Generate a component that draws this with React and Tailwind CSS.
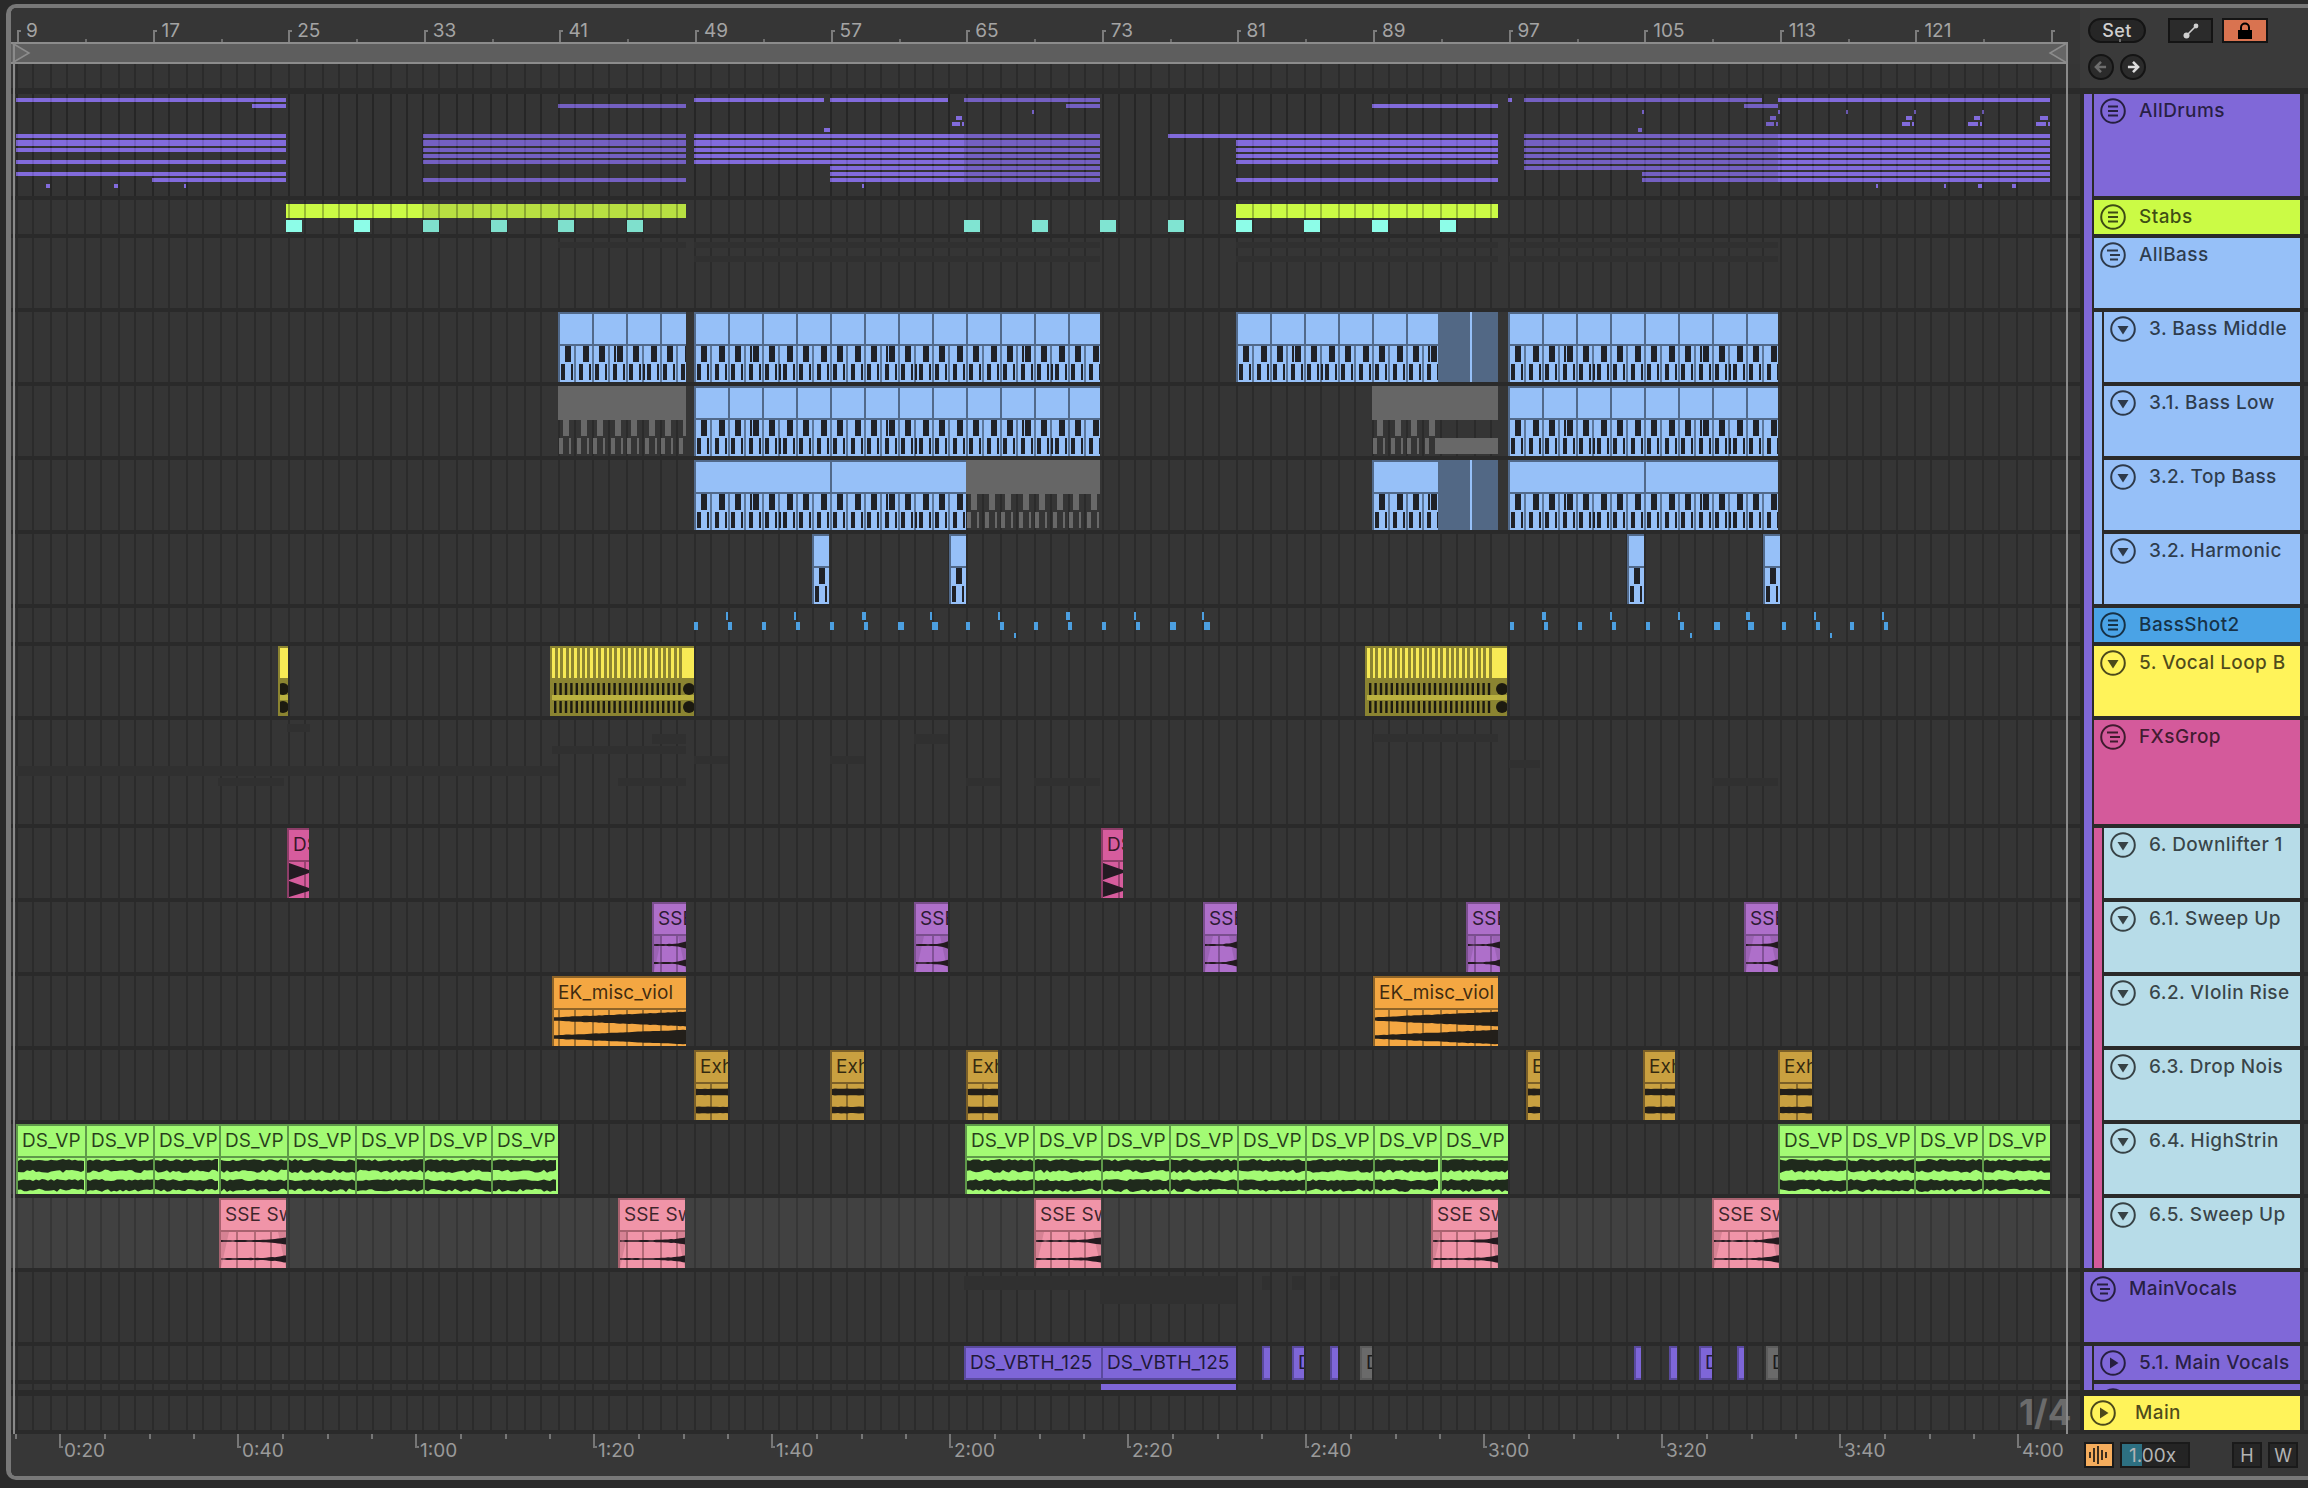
const GRID = Array.from({ length: 123 }, (_, i) => {
  const k = Math.floor(i / 2);
  const even = Math.round((16.2 + 33.9 * k) / 2) * 2;
  return i % 2 === 0 ? even : even + 16;
});

const seeded = (s) => {
  let v = s * 9301 + 49297;
  return () => {
    v = (v * 9301 + 49297) % 233280;
    return v / 233280;
  };
};

// clip palettes
const BLUE = { bg: "#96c0f8", edge: "#51698a" };
const GREEN = { bg: "#a3fb74", edge: "#5f9a4a" };
const YELLOW = { bg: "#f7ea55", edge: "#8b8431" };
const SALMON = { bg: "#f094a8", edge: "#a8626f" };
const VIOLET = { bg: "#ae6fca", edge: "#7a4e8e" };
const ORANGE = { bg: "#f4a742", edge: "#8e6428" };
const GOLD = { bg: "#c9a040", edge: "#7a5f28" };
const PINK = { bg: "#d65c9d", edge: "#8d3d68" };
const PURPLE = { bg: "#7e66d8", edge: "#5a4a9e" };

function Bands({ w, dark, seed }) {
  // two dark channels with a rough edge, the clip colour shows in the gaps
  const r = seeded(seed);
  const band = (y0, y1) => {
    const top = [];
    const bot = [];
    for (let x = 0; x <= w; x += 3) {
      top.push(`${x},${y0 + r() * 2.2}`);
      bot.unshift(`${x},${y1 - r() * 3.4}`);
    }
    return top.concat(bot).join(" ");
  };
  return (
    <>
      <polygon points={band(1, 15)} fill={dark} />
      <polygon points={band(21, 34)} fill={dark} />
    </>
  );
}

function Taper({ w, from, to, ys, seed, pow = 1, dark = "#231f1a" }) {
  const r = seeded(seed);
  return ys.map((y) => {
    const top = [];
    const bot = [];
    for (let x = 0; x <= w + 2; x += 3) {
      const t = Math.min(1, x / w);
      const a = (from + (to - from) * Math.pow(t, pow)) / 2 + r() * 0.5;
      top.push(`${x},${y - a}`);
      bot.unshift(`${x},${y + a}`);
    }
    return <polygon key={y} points={top.concat(bot).join(" ")} fill={dark} />;
  });
}

function Midi({ w, note, grey }) {
  const rects = [];
  for (let k = 0; k * 34 < w; k++) {
    const o = k * 34;
    [
      [5, 0, 6, 16],
      [23, 0, 6, 16],
      [1, 18, 4, 16],
      [11, 18, 2, 16],
      [19, 18, 4, 16],
      [29, 18, 2, 16],
    ].forEach(([x, y, rw, rh], i) => {
      rects.push(<rect key={`${k}-${i}`} x={o + x} y={y} width={rw} height={rh} fill={note} />);
    });
    if (k % 4 === 1 && !grey) rects.push(<rect key={`${k}x`} x={o + 20} y={0} width={2} height={16} fill={note} />);
    if (k % 4 === 2 && !grey) rects.push(<rect key={`${k}y`} x={o + 15} y={18} width={2} height={16} fill={note} />);
  }
  return rects;
}

function ClipBody({ kind, w, x0, edge, seed }) {
  const lines = GRID.filter((g) => g > x0 + 2 && g < x0 + w).map((g) => g - x0);
  return (
    <svg width={w} height={36} className="block">
      {kind !== "stripe" &&
        lines.map((x) => <rect key={x} x={x} y={0} width={2} height={36} fill={edge} opacity={kind === "green" ? 0 : 0.85} />)}
      {kind === "midi" && <Midi w={w} note="#202228" />}
      {kind === "green" && <Bands w={w} dark="#1f2a1c" seed={seed} />}
      {kind === "thin" && (
        <>
          <polygon points={`0,0 8,0 0,36`} fill={edge} opacity="0.35" />
          <polygon points={`${w},0 ${w - 8},0 ${w},36`} fill={edge} opacity="0.35" />
          <Taper w={w} from={1.2} to={7} pow={5} ys={[9, 27]} seed={seed} dark="#231a1f" />
        </>
      )}
      {kind === "wedge" && <Taper w={w} from={3} to={14} ys={[9, 27]} seed={seed} />}
      {kind === "thick" && <Taper w={w} from={6} to={6} ys={[8, 26]} seed={seed} />}
      {kind === "tri" && (
        <>
          <polygon points={`0,1 ${w},8 ${w},11 0,18`} fill="#231a22" />
          <polygon points={`0,19 ${w},26 ${w},29 0,35`} fill="#231a22" />
        </>
      )}
      {kind === "stripe" && (
        <>
          <rect width={w} height={36} fill={edge} />
          <rect y={15} width={w} height={5} fill="#f7ea55" opacity="0.45" />
          {Array.from({ length: Math.max(0, Math.floor((w - 12) / 5.4)) }, (_, i) => (
            <g key={i} fill="#1c1a10">
              <rect x={2 + i * 5.4} y={3} width={2.4} height={12} />
              <rect x={2 + i * 5.4} y={21} width={2.4} height={12} />
            </g>
          ))}
          <circle cx={w - 5} cy={9} r={6} fill="#1c1a10" />
          <circle cx={w - 5} cy={27} r={6} fill="#1c1a10" />
        </>
      )}
    </svg>
  );
}

function Clip({ x0, x1, pal, label, kind, div, seed = 1 }) {
  const w = x1 - x0;
  const marks = [];
  if (div) for (let x = div; x < w - 4; x += div) marks.push(x);
  return (
    <div
      className="absolute top-0 h-full overflow-hidden"
      style={{ left: x0 - 11, width: w, background: pal.edge }}
    >
      <div
        className="relative ml-[2px] mt-[2px] h-[30px] overflow-hidden whitespace-nowrap pl-[4px] text-[19px] leading-[30px] tracking-[0.1px] text-black/75"
        style={{ background: pal.bg }}
      >
        {label}
        {marks.map((x) => (
          <div key={x} className="absolute top-0 h-full w-[2px]" style={{ left: x - 2, background: pal.edge }} />
        ))}
        {kind === "stripe" &&
          Array.from({ length: Math.max(0, Math.floor((w - 14) / 5.4)) }, (_, i) => (
            <div key={i} className="absolute top-0 h-full w-[3px] bg-[#8b8431]" style={{ left: 3 + i * 5.4 }} />
          ))}
      </div>
      {kind && (
        <div className="mt-[2px] ml-[2px]" style={{ background: pal.bg }}>
          <ClipBody kind={kind} w={w - 2} x0={x0 + 2} edge={pal.edge} seed={seed} />
        </div>
      )}
    </div>
  );
}

// muted clip: header block with grey notes and no clip colour behind them
function GreyClip({ x0, x1, band }) {
  const w = x1 - x0;
  return (
    <div className="absolute top-0 h-full" style={{ left: x0 - 11, width: w }}>
      <div className="h-[34px] bg-[#666666]" />
      <svg width={w} height={36} className="block">
        <Midi w={band ? band - x0 : w} note="#686868" grey />
        {band && <rect x={band - x0 - 2} y={18} width={x1 - band + 2} height={16} fill="#686868" />}
      </svg>
    </div>
  );
}

function Box({ x0, x1, y = 0, h, color }) {
  return <div className="absolute" style={{ left: x0 - 11, width: x1 - x0, top: y, height: h ?? "100%", background: color }} />;
}

function Grid({ line = "#2b2b2b", opacity = 1 }) {
  return (
    <svg className="pointer-events-none absolute inset-0 h-full w-full" style={{ opacity }}>
      {GRID.map((g) => (
        <rect key={g} x={g - 11} y={0} width={2} height="100%" fill={line} />
      ))}
    </svg>
  );
}

const B = "#836bdc";
const D = "#7460c2";
const DRUMS = [
  [98, 16, 286, B], [104, 252, 286, B], [134, 16, 286, B], [140, 16, 286, B], [148, 16, 286, B],
  [160, 16, 286, B], [172, 16, 286, B], [178, 152, 286, B], [184, 46, 50, B], [184, 114, 118, B], [184, 184, 186, B],
  [104, 558, 686, D], [134, 423, 686, D], [140, 423, 686, D], [148, 423, 686, D], [154, 423, 686, D], [160, 423, 686, D], [178, 423, 686, D],
  [98, 694, 824, B], [98, 830, 948, B], [98, 964, 1100, D], [104, 1066, 1100, D], [110, 1032, 1034, D], [116, 956, 962, B],
  [122, 952, 960, B], [122, 962, 964, B], [128, 824, 830, B], [184, 862, 864, B],
  [134, 694, 964, B], [140, 694, 964, B], [148, 694, 964, B], [154, 694, 964, B], [160, 694, 964, B],
  [166, 830, 964, B], [172, 830, 964, B], [178, 830, 964, B],
  [134, 964, 1100, D], [140, 964, 1100, D], [148, 964, 1100, D], [154, 964, 1100, D], [160, 964, 1100, D],
  [166, 964, 1100, D], [172, 964, 1100, D], [178, 964, 1100, D],
  [104, 1372, 1498, B], [134, 1168, 1498, B], [140, 1236, 1498, B], [148, 1236, 1498, B], [154, 1236, 1498, B], [160, 1236, 1498, B], [178, 1236, 1498, B],
  [98, 1508, 1512, B], [98, 1524, 1762, D], [98, 1778, 2050, B], [104, 1744, 1778, D],
  [110, 1642, 1644, D], [110, 1778, 1780, D], [110, 1846, 1848, D], [110, 1914, 1916, D], [110, 1982, 1984, D],
  [116, 1770, 1776, D], [116, 1906, 1912, B], [116, 1974, 1980, B], [116, 2040, 2048, B],
  [122, 1766, 1774, D], [122, 1776, 1778, D], [122, 1902, 1910, B], [122, 1912, 1914, B], [122, 1968, 1978, B], [122, 1980, 1982, B], [122, 2036, 2046, B], [122, 2048, 2050, B],
  [128, 1638, 1642, D], [184, 1876, 1878, B], [184, 1944, 1946, B], [184, 1978, 1982, B], [184, 2012, 2016, B],
  ...[134, 140, 148, 154, 160, 166].flatMap((y) => [[y, 1524, 1778, D], [y, 1778, 2050, B]]),
  ...[172, 178].flatMap((y) => [[y, 1642, 1778, D], [y, 1778, 2050, B]]),
];

function DrumNotes() {
  return (
    <>
      <svg className="absolute inset-0 h-full w-full">
        {DRUMS.map(([y, a, b, c], i) => (
          <rect key={i} x={a - 11} y={y - 94} width={b - a} height={y === 140 ? 6 : 4} fill={c} />
        ))}
      </svg>
      <Grid line="#000000" opacity={0.1} />
    </>
  );
}

function StabClips() {
  const cyan = [
    [286, "#8dfde8"], [354, "#8dfde8"], [423, "#7fe0cd"], [491, "#7fe0cd"], [558, "#7fe0cd"], [627, "#7fe0cd"],
    [964, "#80e4d2"], [1032, "#80e4d2"], [1100, "#80e4d2"], [1168, "#80e4d2"],
    [1236, "#8dfde8"], [1304, "#8dfde8"], [1372, "#8dfde8"], [1440, "#8dfde8"],
  ];
  return (
    <>
      <Box x0={286} x1={423} y={4} h={14} color="#cbfb45" />
      <Box x0={423} x1={686} y={4} h={14} color="#b8e042" />
      <Box x0={1236} x1={1498} y={4} h={14} color="#cbfb45" />
      {cyan.map(([x, c]) => (
        <Box key={x} x0={x} x1={x + 16} y={20} h={12} color={c} />
      ))}
      <svg className="absolute inset-0 h-[18px] w-full">
        {GRID.filter((g) => (g > 286 && g < 686) || (g > 1236 && g < 1498)).map((g) => (
          <rect key={g} x={g - 11} y={4} width={2} height={14} fill="#000000" opacity="0.25" />
        ))}
      </svg>
    </>
  );
}

function ShotNotes() {
  const xs = [];
  for (let x = 694; x < 1207; x += 34) xs.push(x);
  for (let x = 1510; x < 1885; x += 34) xs.push(x);
  return (
    <svg className="absolute inset-0 h-full w-full">
      {xs.map((x, i) => (
        <g key={x} fill="#4c9fe0">
          <rect x={x - 11} y={14} width={i % 8 > 5 ? 6 : 4} height={8} />
          {i % 2 === 1 && <rect x={x - 13} y={4} width={i % 6 === 5 ? 4 : 2} height={8} />}
        </g>
      ))}
      {[1014, 1690, 1830].map((x) => (
        <rect key={x} x={x - 11} y={25} width={2} height={5} fill="#4c9fe0" />
      ))}
    </svg>
  );
}

const faint = "#303030";

const LANES = {
  drums: <DrumNotes />,
  stabs: <StabClips />,
  allbass: (
    <>
      <Box x0={558} x1={686} y={4} h={6} color={faint} />
      {[[694, 1100], [1236, 1498], [1509, 1778]].map(([a, b]) => (
        <div key={a}>
          <Box x0={a} x1={b} y={4} h={6} color={faint} />
          <Box x0={a} x1={b} y={18} h={6} color={faint} />
        </div>
      ))}
    </>
  ),
  middle: (
    <>
      <Clip x0={558} x1={686} pal={BLUE} kind="midi" div={34} />
      <Clip x0={694} x1={1100} pal={BLUE} kind="midi" div={34} />
      <Clip x0={1236} x1={1470} pal={BLUE} kind="midi" div={34} />
      <Box x0={1438} x1={1470} color="#526885" />
      <Box x0={1470} x1={1472} color="#96c0f8" />
      <Box x0={1472} x1={1498} color="#526885" />
      <Clip x0={1508} x1={1778} pal={BLUE} kind="midi" div={34} />
    </>
  ),
  low: (
    <>
      <GreyClip x0={558} x1={686} />
      <Clip x0={694} x1={1100} pal={BLUE} kind="midi" div={34} />
      <GreyClip x0={1372} x1={1498} band={1438} />
      <Clip x0={1508} x1={1778} pal={BLUE} kind="midi" div={34} />
    </>
  ),
  top: (
    <>
      <Clip x0={694} x1={966} pal={BLUE} kind="midi" div={136} />
      <GreyClip x0={966} x1={1100} />
      <Clip x0={1372} x1={1470} pal={BLUE} kind="midi" />
      <Box x0={1438} x1={1470} color="#526885" />
      <Box x0={1470} x1={1472} color="#96c0f8" />
      <Box x0={1472} x1={1498} color="#526885" />
      <Clip x0={1508} x1={1778} pal={BLUE} kind="midi" div={136} />
    </>
  ),
  harmonic: [812, 949, 1627, 1763].map((x) => <Clip key={x} x0={x} x1={x + 17} pal={BLUE} kind="midi" />),
  shot: <ShotNotes />,
  vocal: (
    <>
      <Clip x0={278} x1={288} pal={YELLOW} kind="stripe" />
      <Clip x0={550} x1={694} pal={YELLOW} kind="stripe" />
      <Clip x0={1365} x1={1507} pal={YELLOW} kind="stripe" />
    </>
  ),
  fx: (
    <>
      {[
        [287, 310, 4, 8], [652, 686, 14, 10], [552, 686, 26, 8], [694, 728, 36, 8], [830, 864, 36, 8], [914, 948, 14, 10],
        [618, 686, 58, 8], [15, 558, 46, 10], [218, 284, 58, 8], [966, 1000, 58, 8], [1034, 1100, 58, 8],
        [1509, 1540, 40, 8], [1712, 1778, 58, 8], [1373, 1498, 14, 8],
      ].map(([a, b, y, h]) => (
        <Box key={`${a}-${y}`} x0={a} x1={b} y={y} h={h} color={faint} />
      ))}
    </>
  ),
  down: [287, 1101].map((x) => <Clip key={x} x0={x} x1={x + 22} pal={PINK} kind="tri" label="DS" />),
  sweep: [652, 914, 1203, 1466, 1744].map((x, i) => (
    <Clip key={x} x0={x} x1={x + 34} pal={VIOLET} kind="thin" label="SSE" seed={i + 3} />
  )),
  violin: (
    <>
      <Clip x0={552} x1={686} pal={ORANGE} kind="wedge" label="EK_misc_viol" seed={7} />
      <Clip x0={1373} x1={1498} pal={ORANGE} kind="wedge" label="EK_misc_viol" seed={9} />
    </>
  ),
  drop: [[694, 728], [830, 864], [966, 998], [1526, 1540], [1643, 1675], [1778, 1812]].map(([a, b], i) => (
    <Clip key={a} x0={a} x1={b} pal={GOLD} kind="thick" label={b - a < 20 ? "E" : "Exh"} seed={i + 2} />
  )),
  high: [
    [16, 85], [85, 153], [153, 219], [219, 287], [287, 355], [355, 423], [423, 491], [491, 558],
    [965, 1033], [1033, 1101], [1101, 1169], [1169, 1237], [1237, 1305], [1305, 1373], [1373, 1440], [1440, 1508],
    [1778, 1846], [1846, 1914], [1914, 1982], [1982, 2050],
  ].map(([a, b], i) => <Clip key={a} x0={a} x1={b} pal={GREEN} kind="green" label="DS_VP" seed={i + 11} />),
  up: [219, 618, 1034, 1431, 1712].map((x, i) => (
    <Clip key={x} x0={x} x1={x + 67} pal={SALMON} kind="thin" label="SSE Sw" seed={i + 31} />
  )),
  mainvox: (
    <>
      <Box x0={964} x1={1236} y={4} h={14} color={faint} />
      <Box x0={1100} x1={1236} y={18} h={14} color={faint} />
      <Box x0={1262} x1={1270} y={4} h={14} color={faint} />
      <Box x0={1292} x1={1304} y={4} h={14} color={faint} />
      <Box x0={1330} x1={1338} y={4} h={14} color={faint} />
    </>
  ),
  vox: (
    <>
      <Clip x0={964} x1={1101} pal={PURPLE} label="DS_VBTH_125" />
      <Clip x0={1101} x1={1236} pal={PURPLE} label="DS_VBTH_125" />
      <Clip x0={1262} x1={1270} pal={PURPLE} />
      <Clip x0={1292} x1={1304} pal={PURPLE} label="D" />
      <Clip x0={1330} x1={1338} pal={PURPLE} />
      <Clip x0={1360} x1={1372} pal={{ bg: "#6a6a6a", edge: "#5c5c5c" }} label="D" />
      <Clip x0={1634} x1={1641} pal={PURPLE} />
      <Clip x0={1669} x1={1677} pal={PURPLE} />
      <Clip x0={1699} x1={1712} pal={PURPLE} label="D" />
      <Clip x0={1737} x1={1744} pal={PURPLE} />
      <Clip x0={1766} x1={1778} pal={{ bg: "#6a6a6a", edge: "#5c5c5c" }} label="D" />
    </>
  ),
  tail: <Box x0={1101} x1={1236} color="#7e66d8" />,
  main: (
    <div className="absolute -top-[2px] left-[2008px] text-[35px] font-bold leading-[36px] text-[#6b6b6b]">1/4</div>
  ),
};

const P = "#8068d8";
const BL = "#96c0f8";
const PK = "#d45a9b";
const SKY = "#b7dce8";

const ROWS = [
  { lane: "drums", h: "h-[102px]", name: "AllDrums", icon: "lines", color: P, strips: [[P, 1]] },
  { lane: "stabs", h: "h-[34px]", name: "Stabs", icon: "lines", color: "#cbfb45", strips: [[P, 1]] },
  { lane: "allbass", h: "h-[70px]", name: "AllBass", icon: "stagger", color: BL, strips: [[P, 1]] },
  { lane: "middle", h: "h-[70px]", name: "3. Bass Middle", icon: "down", color: BL, strips: [[P, 1], [BL, 1]] },
  { lane: "low", h: "h-[70px]", name: "3.1. Bass Low", icon: "down", color: BL, strips: [[P, 1], [BL, 1]] },
  { lane: "top", h: "h-[70px]", name: "3.2. Top Bass", icon: "down", color: BL, strips: [[P, 1], [BL, 1]] },
  { lane: "harmonic", h: "h-[70px]", name: "3.2. Harmonic", icon: "down", color: BL, strips: [[P, 1], [BL, 0]] },
  { lane: "shot", h: "h-[34px]", name: "BassShot2", icon: "lines", color: "#4aa3e6", strips: [[P, 1]] },
  { lane: "vocal", h: "h-[70px]", name: "5. Vocal Loop B", icon: "down", color: "#fff35a", strips: [[P, 1]] },
  { lane: "fx", h: "h-[104px]", name: "FXsGrop", icon: "stagger", color: PK, strips: [[P, 1]] },
  { lane: "down", h: "h-[70px]", name: "6. Downlifter 1", icon: "down", color: SKY, strips: [[P, 1], [PK, 1]] },
  { lane: "sweep", h: "h-[70px]", name: "6.1. Sweep Up", icon: "down", color: SKY, strips: [[P, 1], [PK, 1]] },
  { lane: "violin", h: "h-[70px]", name: "6.2. VIolin Rise", icon: "down", color: SKY, strips: [[P, 1], [PK, 1]] },
  { lane: "drop", h: "h-[70px]", name: "6.3. Drop Nois", icon: "down", color: SKY, strips: [[P, 1], [PK, 1]] },
  { lane: "high", h: "h-[70px]", name: "6.4. HighStrin", icon: "down", color: SKY, strips: [[P, 1], [PK, 1]] },
  { lane: "up", h: "h-[70px]", name: "6.5. Sweep Up", icon: "down", color: SKY, strips: [[P, 0], [PK, 0]], lit: true },
  { lane: "mainvox", h: "h-[70px]", name: "MainVocals", icon: "stagger", color: P, strips: [] },
  { lane: "vox", h: "h-[34px]", name: "5.1. Main Vocals", icon: "right", color: P, strips: [[P, 1]] },
  { lane: "tail", h: "h-[6px]", name: "", icon: "right", color: P, strips: [[P, 0]], tail: true },
  { lane: "main", h: "h-[34px]", name: "Main", icon: "right", color: "#fff35a", strips: [], wide: true },
];

function FoldIcon({ type }) {
  return (
    <svg width="26" height="26" viewBox="0 0 26 26" className="shrink-0" fill="none" stroke="currentColor" strokeWidth="2">
      <circle cx="13" cy="13" r="11.8" />
      {type === "lines" && <path d="M8 8.5h10M8 13h10M8 17.5h10" strokeWidth="2" />}
      {type === "stagger" && <path d="M7 8.5h11M10 13h10M10 17.5h8" strokeWidth="2" />}
      {type === "down" && <path d="M7.5 10h11L13 18.5z" fill="currentColor" stroke="none" />}
      {type === "right" && <path d="M10 7.5v11L18.5 13z" fill="currentColor" stroke="none" />}
    </svg>
  );
}

function TrackHead({ row }) {
  return (
    <div className="flex w-[216px] shrink-0">
      {row.strips.map(([c, run], i) => (
        <div key={i} className="mr-[2px] flex w-[8px] shrink-0">
          <div className={`w-full ${run ? "h-[calc(100%+4px)]" : "h-full"}`} style={{ background: c }} />
        </div>
      ))}
      <div
        className={`flex min-w-0 flex-1 items-start overflow-hidden whitespace-nowrap pl-[6px] pt-[4px] text-[19px] font-medium leading-[26px] tracking-[0.4px] text-black/70 ${
          row.wide ? "gap-[19px]" : "gap-[13px]"
        }`}
        style={{ background: row.color }}
      >
        {row.icon && <FoldIcon type={row.icon} />}
        {row.name && <span>{row.name}</span>}
      </div>
    </div>
  );
}

function Row({ row }) {
  return (
    <div className={`flex ${row.h} ${row.tail ? "mb-[2px]" : ""}`}>
      <div className={`relative w-[2069px] shrink-0 overflow-hidden ${row.lit ? "bg-[#414141]" : "bg-[#353535]"}`}>
        <Grid line={row.lit ? "#363636" : "#2b2b2b"} />
        {LANES[row.lane]}
      </div>
      <div className="w-[4px] shrink-0" />
      <TrackHead row={row} />
      <div className="w-[4px] shrink-0" />
      <div className="flex-1 bg-[#363636]" />
    </div>
  );
}

function TopRuler() {
  const marks = [];
  for (let b = 9; b <= 129; b += 8) marks.push(b);
  return (
    <div className="relative h-[34px] bg-[#363636]">
      {marks.map((b) => {
        const x = 17 + (b - 9) * 16.95 - 11;
        return (
          <div key={b}>
            <div className="absolute top-[22px] h-[12px] w-[2px] bg-[#7c7c7c]" style={{ left: x }} />
            <div className="absolute top-[22px] h-[2px] w-[4px] bg-[#7c7c7c]" style={{ left: x }} />
            <div className="absolute top-[31px] h-[3px] w-[2px] bg-[#6c6c6c]" style={{ left: x + 68 }} />
            {b < 129 && (
              <div className="absolute top-[13px] text-[19px] leading-[20px] text-[#a4a4a4]" style={{ left: x + 9 }}>
                {b}
              </div>
            )}
          </div>
        );
      })}
    </div>
  );
}

function LoopBar() {
  return (
    <div className="relative h-[22px] w-[2057px] border-y-2 border-[#8c8c8c] bg-[#5e5e5e]">
      <svg width="20" height="22" className="absolute -top-[2px] left-0">
        <path d="M1 1 L18 11 L1 21" fill="#666666" stroke="#8c8c8c" strokeWidth="1.5" />
      </svg>
      <svg width="20" height="22" className="absolute -top-[2px] right-0">
        <path d="M19 1 L2 11 L19 21" fill="#666666" stroke="#8c8c8c" strokeWidth="1.5" />
      </svg>
    </div>
  );
}

function Controls() {
  return (
    <div className="ml-[8px] pt-[10px]">
      <div className="flex h-[25px] items-stretch">
        <div className="flex w-[58px] items-center justify-center rounded-full border-2 border-[#141414] bg-[#262626] text-[18px] font-medium tracking-[0.4px] text-[#cfcfcf]">
          Set
        </div>
        <div className="ml-[22px] flex w-[45px] items-center justify-center border-2 border-[#141414] bg-[#2b2b2b]">
          <svg width="18" height="18" viewBox="0 0 18 18">
            <path d="M4 14 L14 4" stroke="#cfcfcf" strokeWidth="1.6" />
            <circle cx="4.5" cy="13.5" r="3" fill="#cfcfcf" />
            <circle cx="14" cy="4" r="2.4" fill="#cfcfcf" />
          </svg>
        </div>
        <div className="ml-[9px] flex w-[46px] items-center justify-center border-2 border-[#141414] bg-[#d97350]">
          <svg width="16" height="18" viewBox="0 0 16 18">
            <path d="M4 8 V5.5 a4 4 0 0 1 8 0 V8" fill="none" stroke="#000" strokeWidth="2" />
            <rect x="1" y="8" width="14" height="9" fill="#000" />
          </svg>
        </div>
      </div>
      <div className="mt-[11px] flex gap-[6px]">
        {[
          ["M19 13H8M13 7 L7 13 L13 19", "#6e6e6e"],
          ["M7 13H18M13 7 L19 13 L13 19", "#dddddd"],
        ].map(([d, c]) => (
          <div key={d} className="flex h-[26px] w-[26px] items-center justify-center rounded-full border-2 border-[#141414] bg-[#2b2b2b]">
            <svg width="26" height="26" viewBox="0 0 26 26">
              <path d={d} fill="none" stroke={c} strokeWidth="3" />
            </svg>
          </div>
        ))}
      </div>
    </div>
  );
}

function BottomRuler() {
  const labels = ["0:20", "0:40", "1:00", "1:20", "1:40", "2:00", "2:20", "2:40", "3:00", "3:20", "3:40", "4:00"];
  const minor = [];
  for (let k = 0; k < 46; k++) if (k % 4 !== 1) minor.push(15 + k * 44.5);
  return (
    <div className="relative h-[42px] w-[2073px] shrink-0">
      {minor.map((x) => (
        <div key={x} className="absolute top-0 h-[5px] w-[2px] bg-[#767676]" style={{ left: x - 11 }} />
      ))}
      {labels.map((t, i) => {
        const x = 59 + i * 178 - 11;
        return (
          <div key={t}>
            <div className="absolute top-0 h-[14px] w-[2px] bg-[#767676]" style={{ left: x }} />
            <div className="absolute top-[12px] h-[2px] w-[4px] bg-[#767676]" style={{ left: x }} />
            <div className="absolute top-[6px] text-[19px] leading-[22px] text-[#9a9a9a]" style={{ left: x + 5 }}>
              {t}
            </div>
          </div>
        );
      })}
    </div>
  );
}

function BottomControls() {
  return (
    <div className="flex pt-[8px]">
      <div className="flex h-[26px] w-[30px] items-center justify-center border-2 border-[#1a1a1a] bg-[#f5ad5d]">
        <svg width="22" height="20" viewBox="0 0 22 20" stroke="#111" strokeWidth="1.6">
          <path d="M2 7v6M6 3v14M10 1v18M14 5v10M18 7v6" />
        </svg>
      </div>
      <div className="relative ml-[6px] flex h-[26px] w-[70px] items-center border-2 border-[#1a1a1a] bg-[#242424] pl-[7px] text-[19px] leading-none text-[#b4b4b4]">
        <div className="absolute inset-y-0 left-0 w-[20px] bg-[#2d7082]" />
        <span className="relative">1.00x</span>
      </div>
      <div className="ml-[42px] flex h-[26px] w-[30px] items-center justify-center border-2 border-[#1a1a1a] bg-[#262626] text-[18px] text-[#b4b4b4]">
        H
      </div>
      <div className="ml-[6px] flex h-[26px] w-[30px] items-center justify-center border-2 border-[#1a1a1a] bg-[#262626] text-[18px] text-[#b4b4b4]">
        W
      </div>
    </div>
  );
}

export default function App() {
  return (
    <div className="h-[1488px] w-[2308px] overflow-hidden bg-[#2a2a2a] pl-[6px] pt-[4px] font-['Inter','Liberation_Sans',sans-serif]">
      <div className="relative h-[1476px] w-[2302px] overflow-hidden rounded-l-[10px] border-y-4 border-l-[5px] border-[#787878] bg-[#2a2a2a]">
        <div className="flex h-[80px] bg-[#3a3a3a]">
          <div className="w-[2069px] shrink-0">
            <TopRuler />
            <div className="bg-[#363636]">
              <LoopBar />
            </div>
            <div className="relative h-[24px] bg-[#353535]">
              <Grid />
            </div>
          </div>
          <Controls />
        </div>
        <div className="mt-[6px] flex flex-col gap-[4px]">
          {ROWS.map((row) => (
            <Row key={row.lane} row={row} />
          ))}
        </div>
        <div className="mt-[4px] flex h-[42px] bg-[#373737]">
          <BottomRuler />
          <BottomControls />
        </div>
        <div className="absolute left-[2px] top-[34px] h-[1392px] w-[2px] bg-[#8a8a8a]" />
        <div className="absolute left-[2055px] top-[34px] h-[1392px] w-[2px] bg-[#8a8a8a]" />
      </div>
    </div>
  );
}
